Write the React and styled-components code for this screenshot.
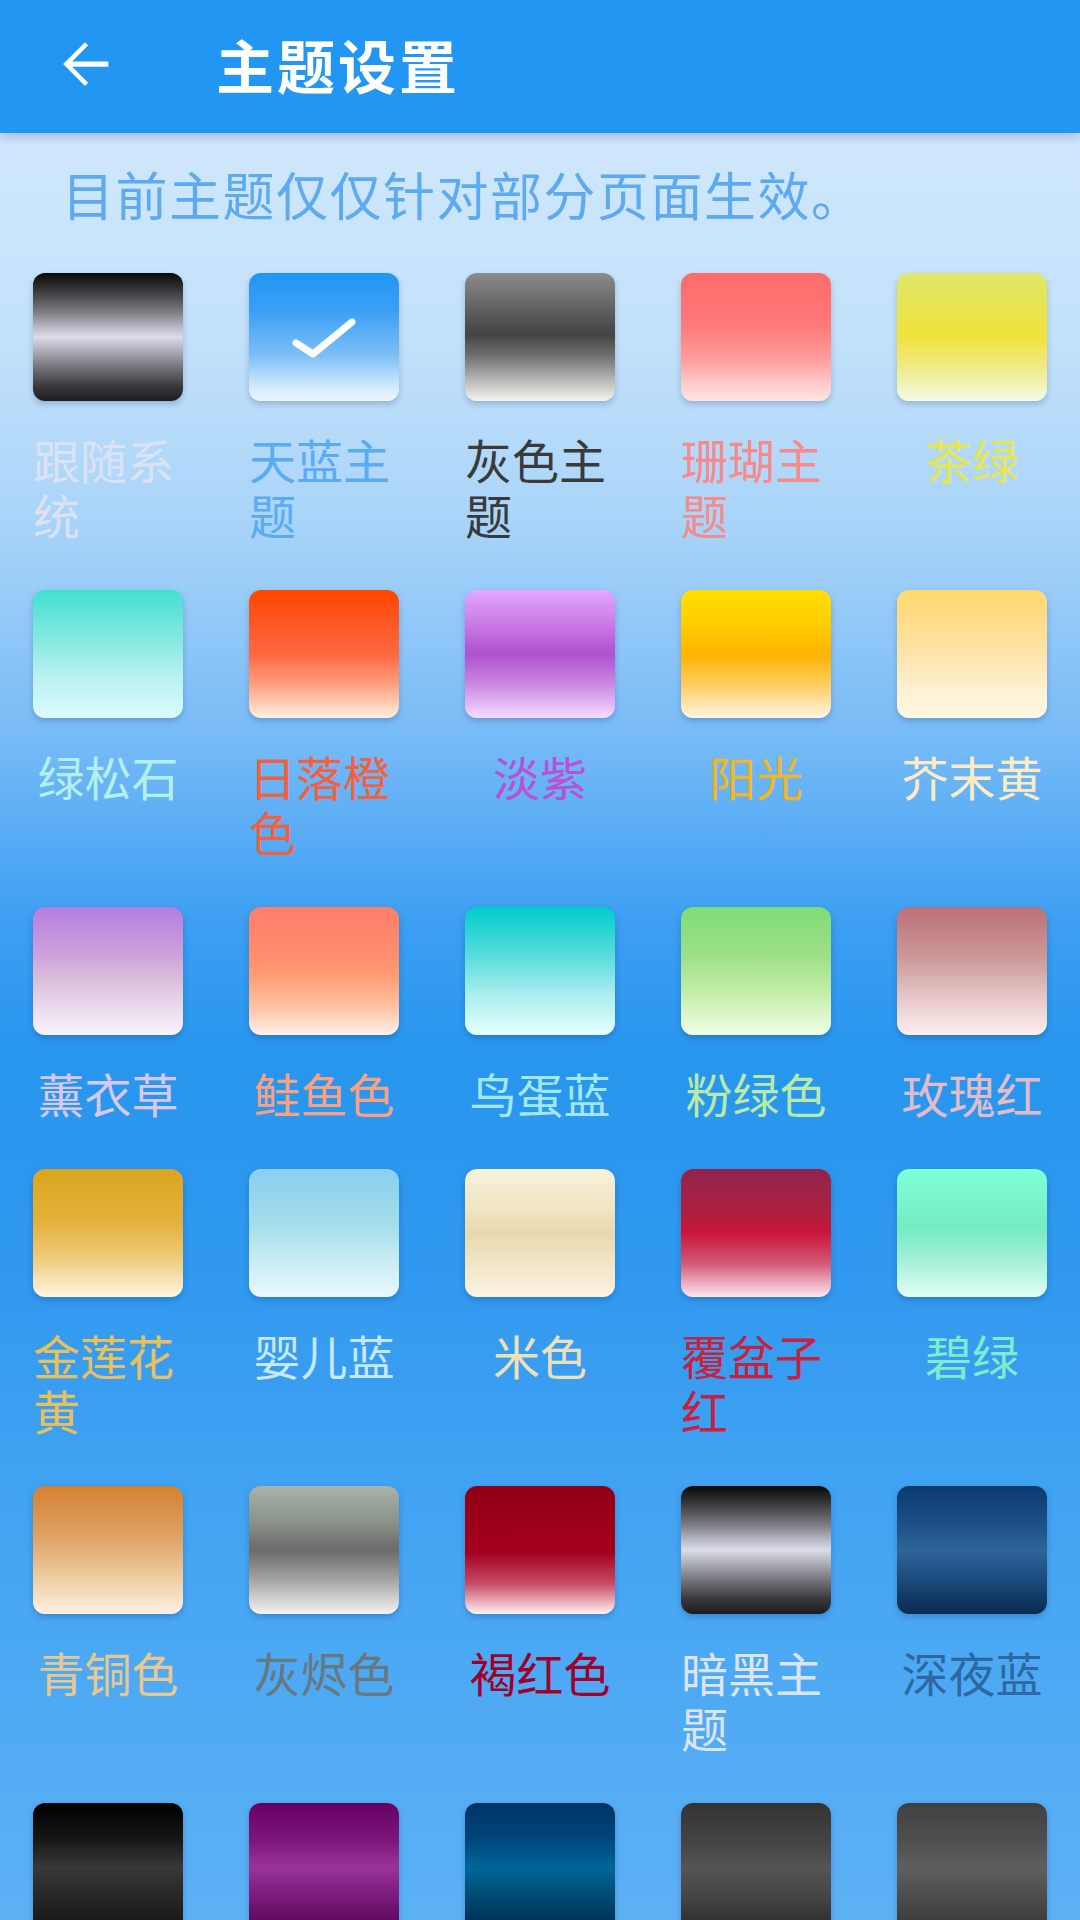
import React from "react";
import styled, { createGlobalStyle } from "styled-components";

const GlobalStyle = createGlobalStyle`
  html, body { margin: 0; padding: 0; }
  body {
    font-family: "Noto Sans CJK SC", "Noto Sans", Roboto, sans-serif;
    background: #5db1f5;
  }
  * { box-sizing: border-box; }
`;

const Page = styled.div`
  width: 1080px;
  height: 1920px;
  overflow: hidden;
  display: flex;
  flex-direction: column;
  background: linear-gradient(
    to bottom,
    #d6eafb 0px,
    #c4e2fb 330px,
    #a9d4f9 520px,
    #7cbdf7 720px,
    #3d9ff2 920px,
    #2896ee 1050px,
    #2f98ef 1250px,
    #45a5f3 1550px,
    #5db1f5 1920px
  );
`;

const Header = styled.header`
  position: relative;
  z-index: 2;
  height: 133px;
  flex: 0 0 133px;
  display: flex;
  align-items: center;
  background: #2196f3;
  box-shadow: 0 3px 10px rgba(0, 40, 90, 0.25);
  padding-left: 50px;
`;

const BackButton = styled.button`
  width: 70px;
  height: 70px;
  padding: 0;
  border: none;
  background: transparent;
  display: flex;
  align-items: center;
  justify-content: center;
  margin-top: -6px;
`;

const Title = styled.h1`
  margin: -6px 0 0 96px;
  font-size: 58px;
  font-weight: 700;
  color: #ffffff;
  letter-spacing: 3px;
  line-height: 1;
`;

const Notice = styled.p`
  margin: 0;
  padding: 25px 0 0 62px;
  height: 97px;
  font-size: 52px;
  line-height: 72px;
  letter-spacing: 1.5px;
  color: #5eaaf0;
`;

const Grid = styled.div`
  display: grid;
  grid-template-columns: repeat(5, 216px);
  padding-top: 43px;
`;

const Cell = styled.div`
  display: flex;
  flex-direction: column;
  align-items: center;
  padding-bottom: 49px;
`;

const Swatch = styled.div`
  position: relative;
  width: 150px;
  height: 128px;
  border-radius: 12px;
  background: ${(p) => p.$bg};
  box-shadow: 0 3px 6px rgba(0, 30, 80, 0.22);
  display: flex;
  align-items: center;
  justify-content: center;
`;

const Label = styled.div`
  margin-top: 30px;
  max-width: 150px;
  width: fit-content;
  font-size: 47px;
  line-height: 55px;
  text-align: left;
  color: ${(p) => p.$color};
  word-break: break-all;
`;

const metal =
  "linear-gradient(to bottom, #080808 0%, #3a3a3c 14%, #7a7a80 30%, #b8b8c4 42%, #dcdcea 50%, #b0b0ba 60%, #727278 74%, #3a3a3e 88%, #1c1c20 100%)";

const themes = [
  { name: "跟随系统", color: "#dbe2f1", bg: metal },
  {
    name: "天蓝主题",
    color: "#5aacf2",
    bg: "linear-gradient(to bottom, #2196f3 0%, #3ba0f5 30%, #7fc0f7 65%, #cfe8fb 88%, #eef7fe 100%)",
    selected: true,
  },
  {
    name: "灰色主题",
    color: "#3a3a3a",
    bg: "linear-gradient(to bottom, #8c8c8c 0%, #606060 28%, #444444 48%, #6e6e6e 64%, #b8b8b8 84%, #f4f4f0 100%)",
  },
  {
    name: "珊瑚主题",
    color: "#f78a8a",
    bg: "linear-gradient(to bottom, #ff6b6b 0%, #ff7878 40%, #ff9a9a 66%, #ffc4c4 84%, #ffe6e6 100%)",
  },
  {
    name: "茶绿",
    color: "#e8e64e",
    bg: "linear-gradient(to bottom, #e0e66c 0%, #e8e44c 30%, #f0e23c 50%, #f0ea88 74%, #f4fbe6 100%)",
  },
  {
    name: "绿松石",
    color: "#b2f0ee",
    bg: "linear-gradient(to bottom, #40e0d0 0%, #80e8e0 35%, #b4f0ee 65%, #dcfcfc 100%)",
  },
  {
    name: "日落橙色",
    color: "#f4603e",
    bg: "linear-gradient(to bottom, #ff4500 0%, #ff5a2a 30%, #ff6840 50%, #ffa080 74%, #fff0e0 100%)",
  },
  {
    name: "淡紫",
    color: "#b850d8",
    bg: "linear-gradient(to bottom, #e2a8ff 0%, #c878e4 28%, #b050d0 50%, #cc88e4 74%, #f4dcff 100%)",
  },
  {
    name: "阳光",
    color: "#f4b522",
    bg: "linear-gradient(to bottom, #ffe000 0%, #ffcc00 28%, #ffb400 50%, #ffcc60 74%, #fff4e6 100%)",
  },
  {
    name: "芥末黄",
    color: "#fbecc6",
    bg: "linear-gradient(to bottom, #ffd96e 0%, #ffe09c 40%, #ffe8bc 62%, #fff2d4 80%, #fff8e4 100%)",
  },
  {
    name: "薰衣草",
    color: "#d8c8ee",
    bg: "linear-gradient(to bottom, #b47ee0 0%, #cc9edc 35%, #dcc0dc 58%, #ecdcee 80%, #f8f4fc 100%)",
  },
  {
    name: "鲑鱼色",
    color: "#f8a282",
    bg: "linear-gradient(to bottom, #ff7e6a 0%, #ff8c6e 35%, #ff9a70 52%, #ffc2a2 78%, #fff0ea 100%)",
  },
  {
    name: "鸟蛋蓝",
    color: "#a2e8f0",
    bg: "linear-gradient(to bottom, #00cccc 0%, #58dcdc 38%, #a8eeee 68%, #e6ffff 100%)",
  },
  {
    name: "粉绿色",
    color: "#b8eaa8",
    bg: "linear-gradient(to bottom, #7edc76 0%, #9ee088 38%, #c4eeaa 68%, #f0ffe6 100%)",
  },
  {
    name: "玫瑰红",
    color: "#e2bcc8",
    bg: "linear-gradient(to bottom, #bc7078 0%, #cc9898 40%, #e4c4c4 68%, #ffeef0 100%)",
  },
  {
    name: "金莲花黄",
    color: "#e8c060",
    bg: "linear-gradient(to bottom, #daa520 0%, #e4b03a 40%, #eec874 68%, #fff6e2 100%)",
  },
  {
    name: "婴儿蓝",
    color: "#c6e8f8",
    bg: "linear-gradient(to bottom, #8acff0 0%, #a0dcea 40%, #c4eaf2 68%, #eaf8ff 100%)",
  },
  {
    name: "米色",
    color: "#ede0b8",
    bg: "linear-gradient(to bottom, #f6f2da 0%, #f0e4c2 32%, #e8d8ac 50%, #f0e4c6 72%, #fcf4e2 100%)",
  },
  {
    name: "覆盆子红",
    color: "#c8203e",
    bg: "linear-gradient(to bottom, #92244e 0%, #a82040 30%, #c8163a 50%, #d45a78 74%, #ffe6f2 100%)",
  },
  {
    name: "碧绿",
    color: "#80ecca",
    bg: "linear-gradient(to bottom, #7effd6 0%, #74ecc2 45%, #a4f0d8 72%, #e2fff6 100%)",
  },
  {
    name: "青铜色",
    color: "#e8c890",
    bg: "linear-gradient(to bottom, #d4822e 0%, #dea062 38%, #ecc898 68%, #fff0e4 100%)",
  },
  {
    name: "灰烬色",
    color: "#687880",
    bg: "linear-gradient(to bottom, #aab4aa 0%, #8a928a 28%, #6a6a6a 50%, #a0a0a0 72%, #f4f4f4 100%)",
  },
  {
    name: "褐红色",
    color: "#a0002a",
    bg: "linear-gradient(to bottom, #8e0018 0%, #9c0018 30%, #a40020 52%, #c84a64 76%, #fff2f4 100%)",
  },
  { name: "暗黑主题", color: "#dce4f2", bg: metal },
  {
    name: "深夜蓝",
    color: "#2e68a2",
    bg: "linear-gradient(to bottom, #0a3a6e 0%, #1c4e86 28%, #2e6498 50%, #1c4c7e 72%, #0a2a52 100%)",
  },
  {
    bg: "linear-gradient(to bottom, #000000 0%, #161616 28%, #383838 50%, #262626 74%, #141414 100%)",
  },
  {
    bg: "linear-gradient(to bottom, #660066 0%, #7a167a 28%, #993399 50%, #7a1a7a 74%, #550055 100%)",
  },
  {
    bg: "linear-gradient(to bottom, #003366 0%, #00457a 28%, #006699 50%, #004a72 74%, #002850 100%)",
  },
  {
    bg: "linear-gradient(to bottom, #333333 0%, #444444 30%, #555555 50%, #444444 74%, #2a2a2a 100%)",
  },
  {
    bg: "linear-gradient(to bottom, #404040 0%, #505050 30%, #5e5e5e 50%, #4c4c4c 74%, #383838 100%)",
  },
];

const BackIcon = () => (
  <svg width="70" height="70" viewBox="0 0 24 24" fill="#ffffff">
    <path d="M20 11.1H7.6l5.5-5.5L12 4.5 4.5 12l7.5 7.5 1.1-1.1-5.5-5.5H20v-1.8z" />
  </svg>
);

const Check = () => (
  <svg width="150" height="128" viewBox="0 0 150 128">
    <polyline
      points="47,70 64,81 103,49"
      fill="none"
      stroke="#ffffff"
      strokeWidth="7"
      strokeLinecap="round"
      strokeLinejoin="round"
    />
  </svg>
);

export default function App() {
  return (
    <>
      <GlobalStyle />
      <Page>
        <Header>
          <BackButton aria-label="返回">
            <BackIcon />
          </BackButton>
          <Title>主题设置</Title>
        </Header>
        <Notice>目前主题仅仅针对部分页面生效。</Notice>
        <Grid>
          {themes.map((t, i) => (
            <Cell key={i}>
              <Swatch $bg={t.bg}>{t.selected && <Check />}</Swatch>
              {t.name && <Label $color={t.color}>{t.name}</Label>}
            </Cell>
          ))}
        </Grid>
      </Page>
    </>
  );
}
